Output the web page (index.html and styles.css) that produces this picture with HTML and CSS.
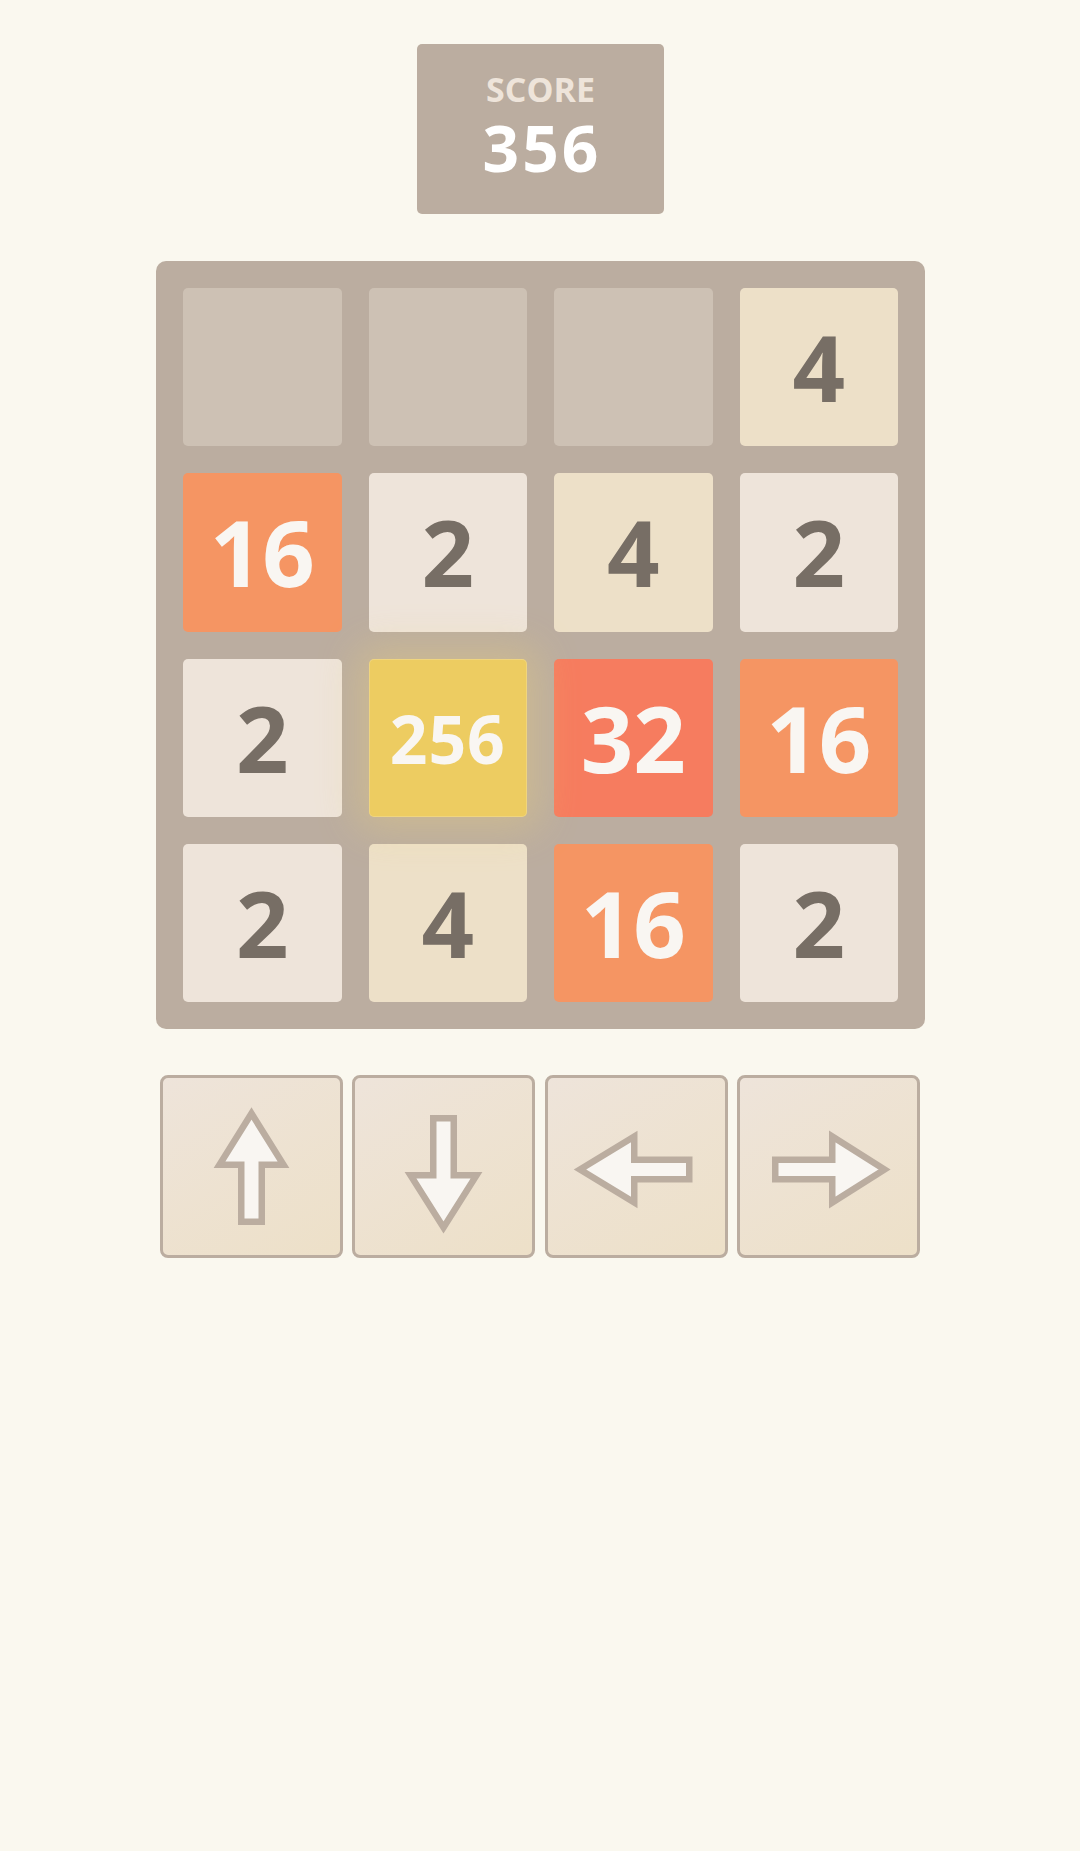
FILE: index.html
```html
<!DOCTYPE html>
<html>
<head>
<meta charset="utf-8">
<title>2048</title>
<link rel="stylesheet" href="styles.css">
</head>
<body>
<main class="game">
  <div class="score-box">
    <div class="score-label">SCORE</div>
    <div class="score-value">356</div>
  </div>

  <div class="board">
    <div class="tile empty"></div>
    <div class="tile empty"></div>
    <div class="tile empty"></div>
    <div class="tile t4">4</div>

    <div class="tile t16">16</div>
    <div class="tile t2">2</div>
    <div class="tile t4">4</div>
    <div class="tile t2">2</div>

    <div class="tile t2">2</div>
    <div class="tile t256">256</div>
    <div class="tile t32">32</div>
    <div class="tile t16">16</div>

    <div class="tile t2">2</div>
    <div class="tile t4">4</div>
    <div class="tile t16">16</div>
    <div class="tile t2">2</div>
  </div>

  <div class="controls">
    <button class="ctrl" aria-label="Up">
      <svg class="arrow" viewBox="-88.5 -88.5 177 177"><polygon points="0,-53 32,-1.75 10.25,-1.75 10.25,55.25 -10.25,55.25 -10.25,-1.75 -32,-1.75"/></svg>
    </button>
    <button class="ctrl" aria-label="Down">
      <svg class="arrow" viewBox="-88.5 -88.5 177 177"><polygon points="0,61 33,8.75 10.25,8.75 10.25,-48.25 -10.25,-48.25 -10.25,8.75 -33,8.75"/></svg>
    </button>
    <button class="ctrl" aria-label="Left">
      <svg class="arrow" viewBox="-88.5 -88.5 177 177"><polygon points="-56.5,3 -2.25,-30 -2.25,-6.75 52.75,-6.75 52.75,12.75 -2.25,12.75 -2.25,36"/></svg>
    </button>
    <button class="ctrl" aria-label="Right">
      <svg class="arrow" viewBox="-88.5 -88.5 177 177"><polygon points="56,3 3.75,-30 3.75,-6.75 -53.25,-6.75 -53.25,12.75 3.75,12.75 3.75,36"/></svg>
    </button>
  </div>
</main>
</body>
</html>
```

FILE: styles.css
```css
* {
  box-sizing: border-box;
}

html, body {
  margin: 0;
  padding: 0;
  background: #faf8ef;
}

body {
  font-family: "Open Sans", "DejaVu Sans", sans-serif;
  min-height: 1851px;
}

.game {
  display: flex;
  flex-direction: column;
  align-items: center;
  padding-top: 44px;
}

.score-box {
  width: 247px;
  height: 170px;
  background: #bbada0;
  border-radius: 5px;
  padding-top: 28px;
  text-align: center;
  margin-left: 1px;
}

.score-label {
  font-size: 34px;
  line-height: 1;
  font-weight: 700;
  color: #eee4da;
  margin-bottom: 10px;
}

.score-value {
  font-size: 64px;
  line-height: 1;
  font-weight: 700;
  color: #ffffff;
  letter-spacing: 3px;
  padding-left: 3px;
}

.board {
  margin-top: 47px;
  margin-left: 1px;
  width: 769px;
  height: 768px;
  background: #bbada0;
  border-radius: 10px;
  padding: 27px;
  display: grid;
  grid-template-columns: repeat(4, 1fr);
  grid-template-rows: repeat(4, 1fr);
  gap: 27px;
}

.tile {
  border-radius: 5px;
  display: flex;
  align-items: center;
  justify-content: center;
  font-weight: 700;
  font-size: 92px;
  line-height: 1;
  color: #776e65;
}

.empty {
  background: #cdc1b4;
}

.t2 {
  background: #eee4da;
}

.t4 {
  background: #ede0c8;
}

.t16 {
  background: #f59563;
  color: #f9f6f2;
}

.t32 {
  background: #f67c5f;
  color: #f9f6f2;
}

.t256 {
  position: relative;
  z-index: 1;
  background: #edcc61;
  color: #f9f6f2;
  font-size: 66px;
  letter-spacing: 1px;
  box-shadow: 0 0 40px 12px rgba(243, 215, 116, 0.32), inset 0 0 0 1px rgba(255, 255, 255, 0.19);
}

.controls {
  margin-top: 46px;
  width: 761px;
  display: grid;
  grid-template-columns: repeat(4, 183px);
  justify-content: space-between;
}

.ctrl {
  width: 183px;
  height: 183px;
  padding: 0;
  margin: 0;
  border: 3px solid #bbada0;
  border-radius: 8px;
  background: linear-gradient(150deg, #eee4da 0%, #ede0c8 100%);
  display: block;
}

.arrow {
  display: block;
  width: 177px;
  height: 177px;
}

.arrow polygon {
  fill: #f9f6f2;
  stroke: #bbada0;
  stroke-width: 6.5;
  stroke-linejoin: miter;
  stroke-miterlimit: 10;
}
```
